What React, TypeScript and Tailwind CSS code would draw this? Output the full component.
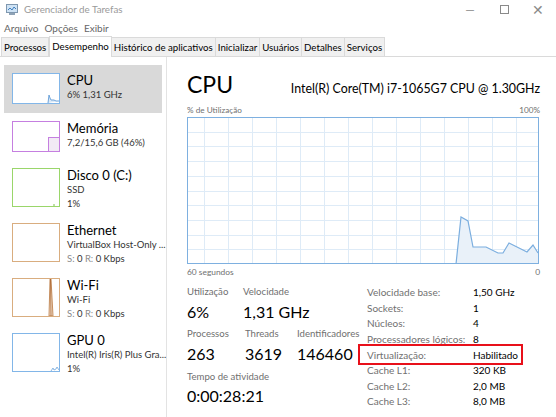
import React from "react";

type Item = {
  name: string;
  lines: React.ReactNode[];
  border: string;
  tall: boolean;
  selected?: boolean;
  kind: "cpu" | "mem" | "disk" | "eth" | "wifi" | "gpu";
};

const items: Item[] = [
  { name: "CPU", lines: ["6%  1,31 GHz"], border: "border-[#82b6e8]", tall: false, selected: true, kind: "cpu" },
  { name: "Memória", lines: ["7,2/15,6 GB (46%)"], border: "border-[#c57fe0]", tall: false, kind: "mem" },
  { name: "Disco 0 (C:)", lines: ["SSD", "1%"], border: "border-[#9ad66a]", tall: true, kind: "disk" },
  {
    name: "Ethernet",
    lines: [
      "VirtualBox Host-Only ...",
      <span key="s">
        <span className="text-[#8a8a8a]">S:</span> 0 <span className="text-[#8a8a8a]">R:</span> 0 Kbps
      </span>,
    ],
    border: "border-[#d9ad7f]",
    tall: true,
    kind: "eth",
  },
  {
    name: "Wi-Fi",
    lines: [
      "Wi-Fi",
      <span key="s">
        <span className="text-[#8a8a8a]">S:</span> 0 <span className="text-[#8a8a8a]">R:</span> 0 Kbps
      </span>,
    ],
    border: "border-[#d9ad7f]",
    tall: true,
    kind: "wifi",
  },
  { name: "GPU 0", lines: ["Intel(R) Iris(R) Plus Gra...", "1%"], border: "border-[#82b6e8]", tall: true, kind: "gpu" },
];

function Thumb({ item }: { item: Item }) {
  const h = item.tall ? 39 : 31;
  return (
    <div className={`relative w-[48px] shrink-0 border bg-white ${item.border} ${item.tall ? "h-[39px]" : "h-[31px]"}`}>
      {item.kind === "cpu" && (
        <svg className="absolute inset-0" width="46" height={h - 2}>
          <polyline points="35,29 36,21 37,24 38,26 41,26 43,27 46,27" fill="#dbe9f7" stroke="#6fa4da" strokeWidth="1" />
        </svg>
      )}
      {item.kind === "mem" && (
        <div className="absolute right-0 bottom-0 w-[11px] h-[14px] border-l border-t border-[#c57fe0] bg-[#f2eaf5]" />
      )}
      {item.kind === "disk" && (
        <svg className="absolute inset-0" width="46" height={h - 2}>
          <line x1="40" y1="36" x2="42" y2="36" stroke="#7cc24a" strokeWidth="1" />
        </svg>
      )}
      {item.kind === "wifi" && (
        <svg className="absolute inset-0" width="46" height={h - 2}>
          <polygon points="37,0 38,0 40,37 36,37" fill="#f3e3d2" stroke="#b8733a" strokeWidth="0.8" />
          <line x1="37.5" y1="0" x2="38" y2="37" stroke="#a85f28" strokeWidth="0.8" />
        </svg>
      )}
      {item.kind === "gpu" && (
        <svg className="absolute inset-0" width="46" height={h - 2}>
          <polyline points="38,37 40,34 41,36 43,35 44,33 46,36" fill="none" stroke="#6fa4da" strokeWidth="0.8" />
        </svg>
      )}
    </div>
  );
}

function Sidebar() {
  return (
    <div className="w-[167px] shrink-0 border-r border-[#e3e3e3] pt-[8px] px-[4px]">
      {items.map((item) => (
        <div
          key={item.name}
          className={`flex pl-[8px] ${item.tall ? "h-[55px] pt-[7px]" : "h-[48px] pt-[8px]"} ${item.selected ? "bg-[#d9d9d9]" : ""}`}
        >
          <Thumb item={item} />
          <div className="ml-[7px] -mt-[1px] whitespace-nowrap">
            <div className="text-[13px] leading-[16px] text-black">{item.name}</div>
            {item.lines.map((l, i) => (
              <div key={i} className="text-[9.5px] leading-[14px] text-[#333]">
                {l}
              </div>
            ))}
          </div>
        </div>
      ))}
    </div>
  );
}

function Graph() {
  const w = 352;
  const h = 147;
  const vx = Array.from({ length: 14 }, (_, k) => 17 + k * 24);
  const hy = Array.from({ length: 9 }, (_, k) => (k + 1) * 14.7);
  const pts = "269,147 274,100 281,104 286,130 299,130 311,136 316,136 322,126 332,131 340,135 346,128 351,136";
  return (
    <svg width={w} height={h} className="block">
      <rect x="0.5" y="0.5" width={w - 1} height={h - 1} fill="#fff" />
      {vx.map((x) => (
        <line key={x} x1={x + 0.5} y1="0" x2={x + 0.5} y2={h} stroke="#deebf7" strokeWidth="1" />
      ))}
      {hy.map((y) => (
        <line key={y} x1="0" y1={Math.round(y) + 0.5} x2={w} y2={Math.round(y) + 0.5} stroke="#deebf7" strokeWidth="1" />
      ))}
      <polygon points={`${pts} 351,147`} fill="#e9f1f9" />
      <polyline points={pts} fill="none" stroke="#7baedf" strokeWidth="1.2" />
      <rect x="0.5" y="0.5" width={w - 1} height={h - 1} fill="none" stroke="#7eb0e0" strokeWidth="1" />
    </svg>
  );
}

function Stat({ label, value, w }: { label: string; value: string; w: string }) {
  return (
    <div className={w}>
      <div className="text-[9.6px] leading-[14px] text-[#707070] whitespace-nowrap">{label}</div>
      <div className="mt-[2px] text-[16px] leading-[22px] text-black whitespace-nowrap">{value}</div>
    </div>
  );
}

const specs: [string, string][] = [
  ["Velocidade base:", "1,50 GHz"],
  ["Sockets:", "1"],
  ["Núcleos:", "4"],
  ["Processadores lógicos:", "8"],
  ["Virtualização:", "Habilitado"],
  ["Cache L1:", "320 KB"],
  ["Cache L2:", "2,0 MB"],
  ["Cache L3:", "8,0 MB"],
];

function Detail() {
  return (
    <div className="flex-1 pl-[20px] pr-[16px] pt-[13px]">
      <div className="flex items-baseline justify-between">
        <div className="text-[23px] leading-[28px] text-black">CPU</div>
        <div className="text-[12.4px] leading-[18px] text-black">Intel(R) Core(TM) i7-1065G7 CPU @ 1.30GHz</div>
      </div>
      <div className="mt-[6px] flex justify-between text-[8.2px] leading-[12px] text-[#707070]">
        <span>% de Utilização</span>
        <span>100%</span>
      </div>
      <div className="mt-[1px]">
        <Graph />
      </div>
      <div className="mt-[2px] flex justify-between text-[8.4px] leading-[12px] text-[#707070]">
        <span>60 segundos</span>
        <span>0</span>
      </div>
      <div className="mt-[7px] flex">
        <div className="w-[180px] shrink-0">
          <div className="flex">
            <Stat label="Utilização" value="6%" w="w-[56px]" />
            <Stat label="Velocidade" value="1,31 GHz" w="w-[110px]" />
          </div>
          <div className="mt-[4px] flex">
            <Stat label="Processos" value="263" w="w-[58px]" />
            <Stat label="Threads" value="3619" w="w-[52px]" />
            <Stat label="Identificadores" value="146460" w="w-[70px]" />
          </div>
          <div className="mt-[5px]">
            <div className="text-[9.6px] leading-[14px] text-[#707070]">Tempo de atividade</div>
            <div className="mt-[1px] text-[16px] leading-[22px] text-black">0:00:28:21</div>
          </div>
        </div>
        <div className="flex-1">
          {specs.map(([k, v]) => (
            <div key={k} className="relative flex h-[15.6px] items-center text-[10px] whitespace-nowrap">
              <span className="w-[106px] shrink-0 text-[#707070]">{k}</span>
              <span className="text-black">{v}</span>
              {k === "Virtualização:" && (
                <div className="absolute left-[-9px] top-[-3px] h-[21px] w-[165px] border-2 border-[#e8101a]" />
              )}
            </div>
          ))}
        </div>
      </div>
    </div>
  );
}

const tabs = ["Processos", "Desempenho", "Histórico de aplicativos", "Inicializar", "Usuários", "Detalhes", "Serviços"];

export default function App() {
  return (
    <div className="w-[556px] h-[417px] overflow-hidden bg-white font-['Lato',sans-serif] flex flex-col">
      {/* title bar */}
      <div className="flex h-[19px] shrink-0 items-center">
        <svg width="12" height="11" viewBox="0 0 12 11" className="ml-[6px]">
          <rect x="0.5" y="0.5" width="11" height="8" fill="#cfe3f5" stroke="#7f98b0" />
          <polyline points="2,6 4,4 6,6 8,3 10,5" fill="none" stroke="#3f7fbf" strokeWidth="1" />
          <rect x="3" y="9" width="6" height="2" fill="#8fa3b6" />
        </svg>
        <span className="ml-[6px] text-[9.8px] text-[#9a9a9a]">Gerenciador de Tarefas</span>
        <div className="ml-auto flex items-center text-[#8a8a8a]">
          <span className="w-[34px] text-center text-[12px]">—</span>
          <span className="w-[34px] flex justify-center">
            <span className="block h-[9px] w-[9px] border border-[#8a8a8a]" />
          </span>
          <span className="w-[34px] text-center text-[14px] mr-[1px]">✕</span>
        </div>
      </div>
      {/* menu */}
      <div className="flex h-[19px] shrink-0 items-center gap-[6px] px-[4px] text-[10px] text-[#666]">
        <span>Arquivo</span>
        <span>Opções</span>
        <span>Exibir</span>
      </div>
      {/* tabs */}
      <div className="flex h-[19px] shrink-0 items-end border-b border-[#dadada] pl-[1px]">
        {tabs.map((t) =>
          t === "Desempenho" ? (
            <div
              key={t}
              className="relative -mb-[1px] flex h-[21px] items-start border border-b-0 border-[#dadada] bg-white px-[2px] pt-[2px] text-[9.7px] leading-[14px] text-black"
            >
              {t}
            </div>
          ) : (
            <div
              key={t}
              className="flex h-[19px] items-center border border-l-0 border-b-0 border-[#dadada] bg-[#f0f0f0] px-[2px] text-[9.7px] text-black first:border-l"
            >
              {t}
            </div>
          )
        )}
      </div>
      {/* body */}
      <div className="flex flex-1">
        <Sidebar />
        <Detail />
      </div>
    </div>
  );
}
